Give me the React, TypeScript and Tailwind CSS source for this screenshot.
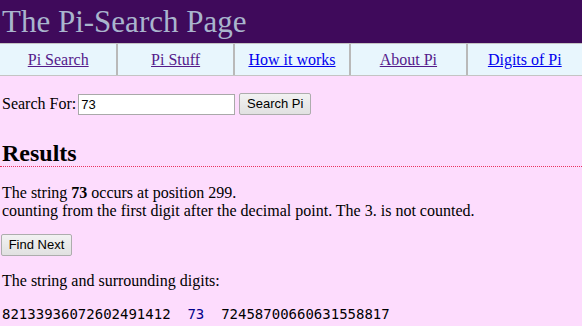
const NAV_LINKS = [
  { label: 'Pi Search', visited: true },
  { label: 'Pi Stuff', visited: true },
  { label: 'How it works', visited: false },
  { label: 'About Pi', visited: true },
  { label: 'Digits of Pi', visited: false },
];

const serif = "font-['Liberation_Serif','Times_New_Roman',serif]";

export default function App() {
  return (
    <div className={`min-h-[326px] w-[582px] bg-[#fddcfd] text-[16px] text-black ${serif}`}>
      {/* Banner */}
      <div className="h-[43px] bg-[#3f0a5b] pl-[2px] text-[31px] leading-[43px] text-[#a9b5cd]">
        The Pi-Search Page
      </div>

      {/* Nav table */}
      <div className="grid h-[33px] grid-cols-5 border-t border-b border-[#c4c4c4] bg-[#e8f6fd]">
        {NAV_LINKS.map((link, i) => (
          <div
            key={link.label}
            className={`flex items-center justify-center leading-[18px] ${
              i > 0 ? 'border-l-2 border-[#b9b9b9]' : ''
            }`}
          >
            <a
              href="#"
              className={`underline ${link.visited ? 'text-[#551a8b]' : 'text-[#0000ee]'}`}
            >
              {link.label}
            </a>
          </div>
        ))}
      </div>

      <div className="pl-[2px]">
        {/* Search form */}
        <form className="mt-[17px] flex h-[22px] items-center" onSubmit={e => e.preventDefault()}>
          <span className="leading-[18px]">Search For:</span>
          <input
            type="text"
            defaultValue="73"
            className="ml-[2px] h-[21px] w-[157px] border border-[#a9a9a9] bg-white px-[2px] font-['Liberation_Sans',Arial,sans-serif] text-[13px] text-black outline-none"
          />
          <button
            type="submit"
            className="ml-[4px] h-[22px] w-[72px] rounded-[2px] border border-[#adadad] bg-gradient-to-b from-[#f2f2f2] to-[#e1e1e1] font-['Liberation_Sans',Arial,sans-serif] text-[13px] text-black"
          >
            Search Pi
          </button>
        </form>

        {/* Results */}
        <h2 className="mt-[26px] -ml-[2px] border-b border-dotted border-[#e8325f] pl-[2px] text-[24px] font-bold leading-[25px]">
          Results
        </h2>

        <p className="mt-[17px] leading-[18px]">
          The string <b>73</b> occurs at position 299.
          <br />
          counting from the first digit after the decimal point. The 3. is not counted.
        </p>

        <button
          type="button"
          className="-ml-px mt-[14px] block h-[22px] w-[71px] rounded-[2px] border border-[#adadad] bg-gradient-to-b from-[#f2f2f2] to-[#e1e1e1] font-['Liberation_Sans',Arial,sans-serif] text-[13px] text-black"
        >
          Find Next
        </button>

        <p className="mt-[16px] leading-[18px]">The string and surrounding digits:</p>

        <pre className="mt-[15px] font-['DejaVu_Sans_Mono',monospace] text-[14px] leading-[18px]">
          82133936072602491412{'  '}
          <span className="text-[#00008b]">73</span>
          {'  '}72458700660631558817
        </pre>
      </div>
    </div>
  );
}
